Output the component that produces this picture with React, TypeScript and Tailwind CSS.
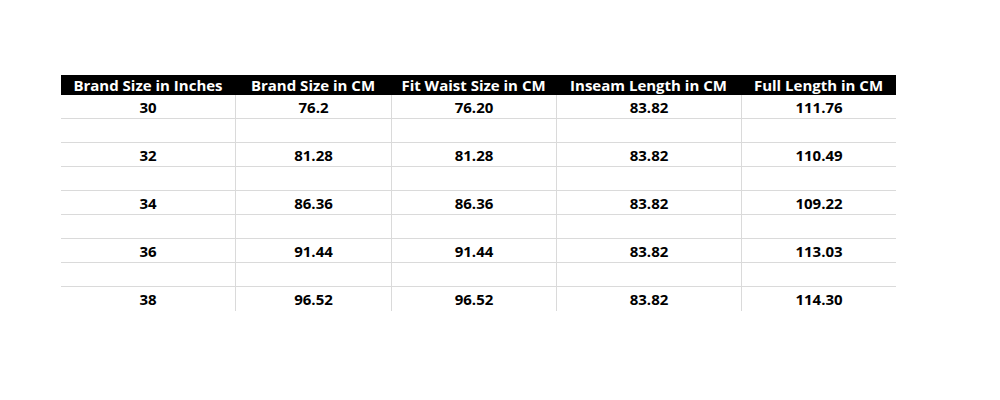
const COLS = ['w-[174px]', 'w-[156px]', 'w-[165px]', 'w-[185px]', 'w-[155px]']

const HEAD = ['Brand Size in Inches', 'Brand Size in CM', 'Fit Waist Size in CM', 'Inseam Length in CM', 'Full Length in CM']

const ROWS: string[][] = [
  ['30', '76.2', '76.20', '83.82', '111.76'],
  ['', '', '', '', ''],
  ['32', '81.28', '81.28', '83.82', '110.49'],
  ['', '', '', '', ''],
  ['34', '86.36', '86.36', '83.82', '109.22'],
  ['', '', '', '', ''],
  ['36', '91.44', '91.44', '83.82', '113.03'],
  ['', '', '', '', ''],
  ['38', '96.52', '96.52', '83.82', '114.30'],
]

export default function App() {
  return (
    <div className="h-[400px] w-[1000px] bg-white pl-[61px] pt-[75px] font-['Open_Sans',sans-serif] text-[15px] font-bold">
      <div className="flex h-[20px] w-[835px] bg-black text-white">
        {HEAD.map((h, i) => (
          <div key={i} className={`${COLS[i]} flex items-center justify-center whitespace-nowrap pt-px leading-none`}>
            {h}
          </div>
        ))}
      </div>
      {ROWS.map((row, r) => (
        <div
          key={r}
          className={`flex h-[24px] w-[835px] text-black ${r < ROWS.length - 1 ? 'border-b border-[#dadada]' : ''}`}
        >
          {row.map((c, i) => (
            <div
              key={i}
              className={`${COLS[i]} flex items-center justify-center pt-px leading-none ${i > 0 ? 'border-l border-[#dadada]' : ''}`}
            >
              {c}
            </div>
          ))}
        </div>
      ))}
    </div>
  )
}
